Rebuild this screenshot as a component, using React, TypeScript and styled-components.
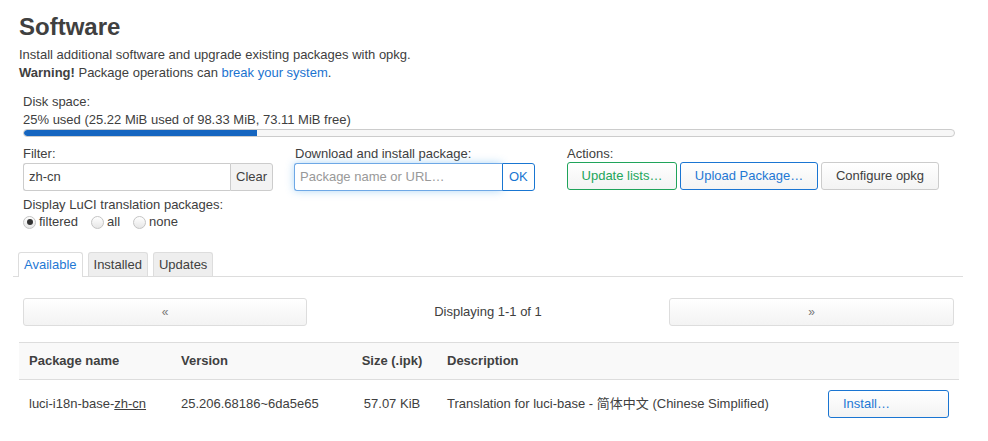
import React from "react";
import styled, { createGlobalStyle, css } from "styled-components";

const Global = createGlobalStyle`
  html, body { margin: 0; padding: 0; background: #fff; }
  body {
    font-family: "Liberation Sans", Arial, "Noto Sans CJK SC", sans-serif;
    font-size: 13px;
    line-height: 18px;
    color: #404040;
  }
  * { box-sizing: border-box; }
`;

const Page = styled.div`
  padding: 11px 25px 0 19px;
  width: 988px;
`;

const Title = styled.h2`
  margin: 0;
  font-size: 24px;
  line-height: 32px;
  font-weight: bold;
  color: #404040;
`;

const Desc = styled.div`
  margin-top: 3px;
  line-height: 18px;
`;

const Link = styled.a`
  color: #1a73d0;
  text-decoration: none;
`;

const Section = styled.div`
  margin: 11px 8px 0 4px;
`;

const Label = styled.div`
  line-height: 18px;
`;

const ControlLabel = styled.div`
  line-height: 16px;
`;

const Bar = styled.div`
  height: 8px;
  border: 1px solid #ccc;
  border-radius: 4px;
  background: #f7f7f7;
  overflow: hidden;
`;

const Fill = styled.div`
  height: 100%;
  background: #1565c0;
  border-radius: 3px 0 0 3px;
`;

const Controls = styled.div`
  display: flex;
  margin-top: 9px;
`;

const Group = styled.div<{ $w: number }>`
  width: ${(p) => p.$w}px;
  flex: none;
`;

const InputGroup = styled.div<{ $shift?: number }>`
  display: flex;
  margin-top: 1px;
  margin-left: ${(p) => p.$shift ?? 0}px;
  height: 28px;
`;

const Input = styled.div<{ $focus?: boolean; $w: number }>`
  width: ${(p) => p.$w}px;
  height: 28px;
  border: 1px solid #ccc;
  border-right: none;
  border-radius: 3px 0 0 3px;
  padding: 0 5px;
  display: flex;
  align-items: center;
  color: #404040;
  background: #fff;
  ${(p) =>
    p.$focus &&
    css`
      border-color: #6ea8e6;
      box-shadow: 0 0 8px rgba(82, 168, 236, 0.45);
      color: #999;
    `}
`;

const AddonButton = styled.div<{ $blue?: boolean }>`
  height: 28px;
  padding: 0 5px;
  display: flex;
  align-items: center;
  border: 1px solid #ccc;
  border-radius: 0 3px 3px 0;
  background: #f3f3f3;
  color: #404040;
  ${(p) =>
    p.$blue &&
    css`
      padding: 0 6px;
      border-color: #1976d2;
      background: #fff;
      color: #1976d2;
    `}
`;

const Actions = styled.div`
  display: flex;
  gap: 3px;
`;

const variants = {
  positive: css`
    border-color: #1fa35a;
    color: #22a65b;
  `,
  action: css`
    border-color: #1a75d2;
    color: #1f78d4;
  `,
  neutral: css`
    border-color: #ccc;
    color: #404040;
  `,
};

const Button = styled.div<{ $v: keyof typeof variants; $w: number }>`
  width: ${(p) => p.$w}px;
  height: 28px;
  display: flex;
  align-items: center;
  justify-content: center;
  border: 1px solid;
  border-radius: 3px;
  background: linear-gradient(#fff, #f3f3f3);
  ${(p) => variants[p.$v]}
`;

const RadioLabel = styled.div`
  margin-top: 5px;
  line-height: 18px;
`;

const Radios = styled.div`
  display: flex;
  align-items: center;
  height: 16px;
`;

const RadioItem = styled.label`
  display: flex;
  align-items: center;
  margin-right: 13px;
`;

const Circle = styled.span<{ $on?: boolean }>`
  width: 13px;
  height: 13px;
  border-radius: 50%;
  border: 1px solid #c4c4c4;
  background: linear-gradient(#fff, #e6e6e6);
  margin: 0 3px 0 0;
  display: inline-flex;
  align-items: center;
  justify-content: center;
  &::after {
    content: "";
    width: 6px;
    height: 6px;
    border-radius: 50%;
    background: ${(p) => (p.$on ? "#333" : "transparent")};
  }
`;

const TabBar = styled.div`
  display: flex;
  gap: 5px;
  margin: 22px 0 0 -6px;
  padding-left: 5px;
  border-bottom: 1px solid #ddd;
  height: 25px;
`;

const Tab = styled.div<{ $active?: boolean }>`
  height: 24px;
  padding: 0 5px;
  display: flex;
  align-items: center;
  border: 1px solid #ddd;
  border-bottom: none;
  border-radius: 3px 3px 0 0;
  background: ${(p) => (p.$active ? "#fff" : "#eee")};
  color: ${(p) => (p.$active ? "#1f78d4" : "#404040")};
  ${(p) => p.$active && css`height: 25px;`}
`;

const Pager = styled.div`
  display: grid;
  grid-template-columns: 284px 1fr 285px;
  align-items: center;
  margin: 21px 9px 0 4px;
`;

const PageButton = styled.div`
  height: 28px;
  display: flex;
  align-items: center;
  justify-content: center;
  border: 1px solid #ddd;
  border-radius: 3px;
  background: linear-gradient(#fff, #f3f3f3);
  color: #777;
  font-size: 12px;
`;

const PagerText = styled.div`
  text-align: center;
`;

const Table = styled.table`
  margin-top: 16px;
  width: 940px;
  border-collapse: collapse;
  table-layout: fixed;
`;

const Th = styled.th<{ $center?: boolean }>`
  background: #f9f9f9;
  border-top: 1px solid #ddd;
  border-bottom: 1px solid #ddd;
  height: 37px;
  padding: ${(p) => (p.$center ? "0 13px 0 8px" : "0 10px")};
  text-align: ${(p) => (p.$center ? "center" : "left")};
  font-weight: bold;
`;

const Td = styled.td<{ $center?: boolean }>`
  height: 49px;
  padding: ${(p) => (p.$center ? "0 13px 0 8px" : "0 10px")};
  text-align: ${(p) => (p.$center ? "center" : "left")};
  vertical-align: middle;
`;

const Under = styled.span`
  text-decoration: underline;
`;

const InstallButton = styled.div`
  height: 28px;
  border: 1px solid #1a75d2;
  border-radius: 3px;
  background: linear-gradient(#fff, #f3f3f3);
  color: #1f78d4;
  display: flex;
  align-items: center;
  padding-left: 14px;
`;

export default function App() {
  return (
    <>
      <Global />
      <Page>
        <Title>Software</Title>
        <Desc>
          Install additional software and upgrade existing packages with opkg.
          <br />
          <b>Warning!</b> Package operations can <Link>break your system</Link>.
        </Desc>
        <Section>
          <Label>Disk space:</Label>
          <Label>25% used (25.22 MiB used of 98.33 MiB, 73.11 MiB free)</Label>
          <Bar>
            <Fill style={{ width: "25%" }} />
          </Bar>
          <Controls>
            <Group $w={272}>
              <ControlLabel>Filter:</ControlLabel>
              <InputGroup>
                <Input $w={207}>zh-cn</Input>
                <AddonButton>Clear</AddonButton>
              </InputGroup>
            </Group>
            <Group $w={272}>
              <ControlLabel>Download and install package:</ControlLabel>
              <InputGroup $shift={-1}>
                <Input $w={208} $focus>
                  Package name or URL…
                </Input>
                <AddonButton $blue>OK</AddonButton>
              </InputGroup>
            </Group>
            <Group $w={390}>
              <ControlLabel>Actions:</ControlLabel>
              <Actions>
                <Button $v="positive" $w={110}>Update lists…</Button>
                <Button $v="action" $w={138}>Upload Package…</Button>
                <Button $v="neutral" $w={118}>Configure opkg</Button>
              </Actions>
            </Group>
          </Controls>
          <RadioLabel>Display LuCI translation packages:</RadioLabel>
          <Radios>
            <RadioItem>
              <Circle $on />
              filtered
            </RadioItem>
            <RadioItem>
              <Circle />
              all
            </RadioItem>
            <RadioItem>
              <Circle />
              none
            </RadioItem>
          </Radios>
        </Section>
        <TabBar>
          <Tab $active>Available</Tab>
          <Tab>Installed</Tab>
          <Tab>Updates</Tab>
        </TabBar>
        <Pager>
          <PageButton>«</PageButton>
          <PagerText>Displaying 1-1 of 1</PagerText>
          <PageButton>»</PageButton>
        </Pager>
        <Table>
          <colgroup>
            <col style={{ width: 152 }} />
            <col style={{ width: 181 }} />
            <col style={{ width: 85 }} />
            <col style={{ width: 381 }} />
            <col style={{ width: 141 }} />
          </colgroup>
          <thead>
            <tr>
              <Th>Package name</Th>
              <Th>Version</Th>
              <Th $center>Size (.ipk)</Th>
              <Th>Description</Th>
              <Th />
            </tr>
          </thead>
          <tbody>
            <tr>
              <Td>
                luci-i18n-base-<Under>zh-cn</Under>
              </Td>
              <Td>25.206.68186~6da5e65</Td>
              <Td $center>57.07 KiB</Td>
              <Td>Translation for luci-base - 简体中文 (Chinese Simplified)</Td>
              <Td>
                <InstallButton>Install…</InstallButton>
              </Td>
            </tr>
          </tbody>
        </Table>
      </Page>
    </>
  );
}
